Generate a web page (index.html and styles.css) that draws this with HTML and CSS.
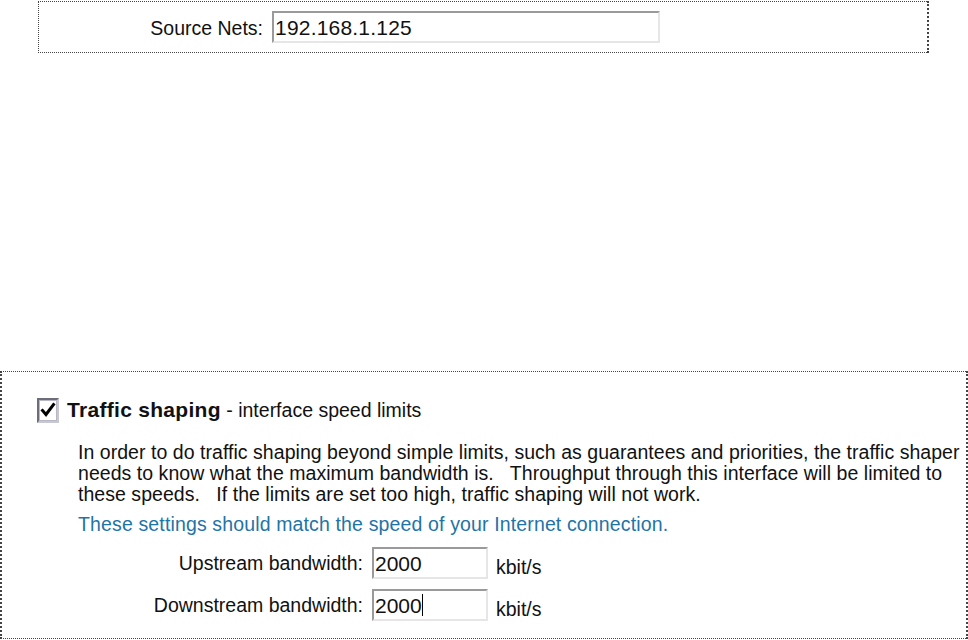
FILE: index.html
```html
<!DOCTYPE html>
<html>
<head>
<meta charset="utf-8">
<link rel="stylesheet" href="styles.css">
</head>
<body>
<div class="top-box">
  <div class="field-row">
    <label class="src-label">Source Nets:</label>
    <div class="input src-input">192.168.1.125</div>
  </div>
</div>
<div class="bottom-box">
  <div class="head">
    <span class="checkbox">
      <svg width="16" height="16" viewBox="0 0 16 16"><path d="M2.5 8.5 L6 12.5 L13.5 2.5" fill="none" stroke="#000" stroke-width="3" stroke-linecap="square"/></svg>
    </span>
    <span class="title">Traffic shaping</span><span class="sub">&nbsp;- interface speed limits</span>
  </div>
  <div class="body">
    <p class="desc">In order to do traffic shaping beyond simple limits, such as guarantees and priorities, the traffic shaper<br>needs to know what the maximum bandwidth is.&nbsp;&nbsp; Throughput through this interface will be limited to<br>these speeds.&nbsp;&nbsp; If the limits are set too high, traffic shaping will not work.</p>
    <p class="note">These settings should match the speed of your Internet connection.</p>
    <div class="bw-row">
      <span class="bw-label">Upstream bandwidth:</span>
      <div class="input bw-input">2000</div>
      <span class="unit">kbit/s</span>
    </div>
    <div class="bw-row">
      <span class="bw-label">Downstream bandwidth:</span>
      <div class="input bw-input">2000<span class="caret"></span></div>
      <span class="unit">kbit/s</span>
    </div>
  </div>
</div>
</body>
</html>
```
FILE: styles.css
```css
html, body {
  margin: 0;
  padding: 0;
  background: #fff;
}
body {
  font-family: "Liberation Sans", Arial, sans-serif;
  font-size: 19.5px;
  color: #111;
  width: 968px;
  height: 640px;
  overflow: hidden;
}
.top-box {
  margin: 1px 0 0 38px;
  width: 888px;
  height: 50px;
  border: 2px dotted #444;
  border-width: 1px 2px 1px 1px;
  box-sizing: content-box;
}
.field-row {
  display: flex;
  align-items: center;
  height: 100%;
}
.src-label {
  width: 224px;
  text-align: right;
  padding-right: 9px;
  padding-top: 3px;
}
.input {
  box-sizing: border-box;
  border: 2px solid #9a9a9a;
  border-right-color: #e6e6e6;
  border-bottom-color: #e6e6e6;
  background: #fff;
  padding-left: 1px;
  display: flex;
  align-items: center;
  line-height: 1;
  font-size: 21px;
}
.src-input {
  width: 388px;
  height: 32px;
  letter-spacing: 0.2px;
}
.bottom-box {
  margin-top: 318px;
  width: 964px;
  height: 266px;
  border: 1px dotted #444;
  border-left-width: 2px;
  border-right-width: 2px;
}
.head {
  display: flex;
  align-items: center;
  margin: 24px 0 0 35px;
  height: 28px;
}
.checkbox {
  width: 22px;
  height: 25px;
  box-sizing: border-box;
  border: 2px solid #888;
  border-top-color: #6d6d7a;
  border-left-color: #6d6d7a;
  border-right-color: #c8c8d0;
  border-bottom-color: #c8c8d0;
  box-shadow: inset 0 0 0 1px #b8b8c4;
  display: flex;
  align-items: center;
  justify-content: center;
  margin-right: 8px;
  background: #fff;
}
.title {
  font-weight: bold;
  font-size: 21px;
  letter-spacing: 0.3px;
}
.body {
  margin-left: 76px;
}
.desc {
  margin: 18px 0 0 0;
  line-height: 21px;
  white-space: nowrap;
  letter-spacing: 0.04px;
}
.note {
  margin: 9px 0 0 0;
  line-height: 21px;
  color: #1f74a6;
  letter-spacing: 0.14px;
}
.bw-row {
  display: flex;
  align-items: center;
  height: 32px;
  margin-top: 12px;
}
.bw-row + .bw-row {
  margin-top: 10px;
}
.bw-label {
  width: 285px;
  text-align: right;
  padding-right: 9px;
}
.bw-input {
  width: 116px;
  height: 32px;
}
.caret {
  display: inline-block;
  width: 1px;
  height: 22px;
  background: #000;
}
.unit {
  margin-left: 8px;
  padding-top: 8px;
}
```
